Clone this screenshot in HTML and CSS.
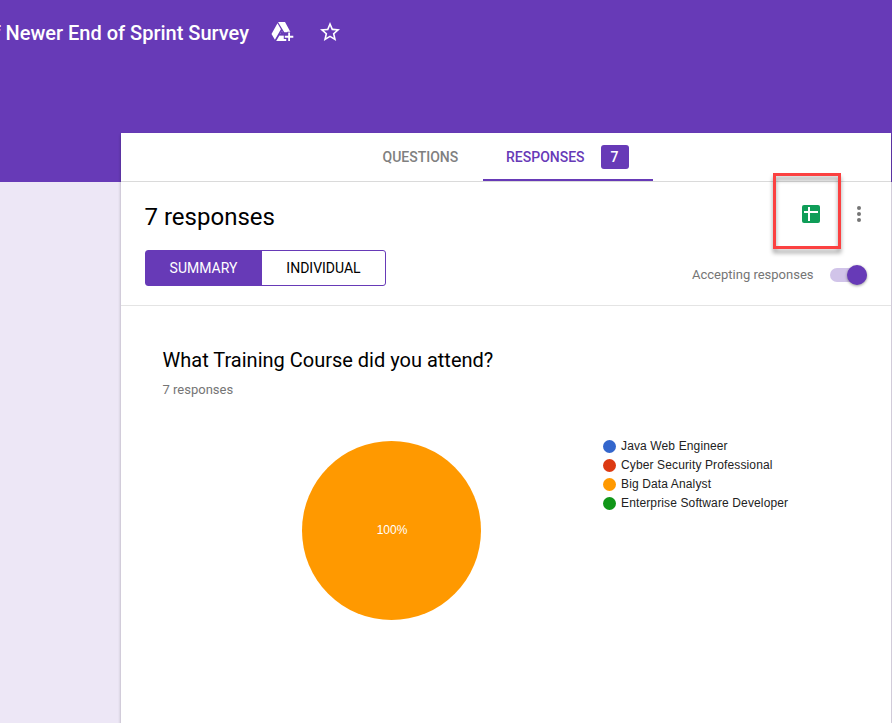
FILE: index.html
```html
<!DOCTYPE html>
<html lang="en">
<head>
<meta charset="utf-8">
<title>Newer End of Sprint Survey</title>
<link rel="stylesheet" href="styles.css">
</head>
<body>
<header class="banner">
  <div class="doc-title"><span>f Newer End of Sprint Survey</span></div>
  <svg class="drive-icon" width="24" height="22" viewBox="0 0 24 22">
    <path fill="#fff" d="M8.300 1H15L20.600 11.200H14.300L8.300 1.600zM7.500 2.200L10.900 8.200 4.900 18.800 1.500 13.100zM10 13.600H13.500L12 9.800 10.500 12.300zM9.400 14.400H16.500V20H6.200z"/>
    <path fill="#673ab7" d="M11.900 9.600L14.300 14.200H9.500zM13.800 13.900H17.400V10.700H21.200V13.900H24V18.100H21V21H16.500V18.100H13.800z"/>
    <path fill="#fff" d="M14.800 14.800H18.200V11.500H20V14.800H23.300V16.700H20V20H18.200V16.700H14.800z"/>
  </svg>
  <svg class="star-icon" width="24" height="24" viewBox="0 0 24 24">
    <path fill="#fff" d="M22 9.240l-7.190-.62L12 2 9.190 8.630 2 9.240l5.460 4.730L5.820 21 12 17.270 18.180 21l-1.630-7.030L22 9.240zM12 15.400l-3.760 2.270 1-4.280-3.320-2.880 4.380-.38L12 6.100l1.710 4.040 4.380.38-3.320 2.880 1 4.280L12 15.400z"/>
  </svg>
</header>
<main class="card">
  <nav class="tabs">
    <div class="tab"><span class="tab-label">QUESTIONS</span></div>
    <div class="tab tab-active"><span class="tab-label">RESPONSES</span><span class="badge">7</span></div>
  </nav>
  <section class="summary">
    <div class="summary-row">
      <h1>7 responses</h1>
      <div class="actions">
        <div class="sheet-button">
          <svg width="18" height="18" viewBox="0 0 18 18">
            <rect width="18" height="18" rx="2" fill="#0f9d58"/>
            <path fill="#fff" d="M2 6h4V2h2v4h8v2H8v8H6V8H2z"/>
          </svg>
          <div class="highlight"></div>
        </div>
        <svg class="more" width="4" height="16" viewBox="0 0 4 16" fill="#757575">
          <circle cx="2" cy="2" r="2"/><circle cx="2" cy="8" r="2"/><circle cx="2" cy="14" r="2"/>
        </svg>
      </div>
    </div>
    <div class="summary-row">
      <div class="segments">
        <div class="segment segment-active"><span>SUMMARY</span></div>
        <div class="segment"><span>INDIVIDUAL</span></div>
      </div>
      <div class="accepting"><span>Accepting responses</span><div class="toggle"><div class="knob"></div></div></div>
    </div>
  </section>
  <section class="question">
    <h2>What Training Course did you attend?</h2>
    <p class="count">7 responses</p>
    <div class="chart">
      <div class="pie"><span>100%</span></div>
      <ul class="legend">
        <li><i class="dot blue"></i><span>Java Web Engineer</span></li>
        <li><i class="dot red"></i><span>Cyber Security Professional</span></li>
        <li><i class="dot orange"></i><span>Big Data Analyst</span></li>
        <li><i class="dot green"></i><span>Enterprise Software Developer</span></li>
      </ul>
    </div>
  </section>
</main>
</body>
</html>
```
FILE: styles.css
```css
* { box-sizing: border-box; }
body {
  margin: 0;
  height: 723px;
  overflow: hidden;
  background: linear-gradient(#673ab7 182px, #ede7f6 182px);
  font-family: Roboto, sans-serif;
  color: #000;
}
h1, h2, p, ul { margin: 0; padding: 0; font-weight: 400; }
.banner { height: 133px; display: flex; align-items: flex-start; }
.doc-title {
  width: 249px;
  height: 24px;
  margin-top: 21px;
  display: flex;
  justify-content: flex-end;
  color: #fff;
  font-size: 20px;
  font-weight: 500;
  line-height: 24px;
  white-space: pre;
}
.drive-icon { margin: 21px 0 0 21px; }
.star-icon { margin: 20px 0 0 24px; }
.card {
  width: 770px;
  height: 600px;
  margin-left: 121px;
  background: #fff;
  box-shadow: 0 2px 3px rgba(0, 0, 0, .3);
}
.tabs {
  height: 49px;
  border-bottom: 1px solid #dadada;
  display: flex;
  padding-left: 238px;
}
.tab {
  height: 48px;
  width: 124px;
  padding-left: 23.500px;
  display: flex;
  align-items: center;
  font-size: 14px;
  font-weight: 500;
  color: #808080;
}
.tab-active { width: 170px; padding: 2px 0 0 23px; color: #673ab7; border-bottom: 2px solid #673ab7; }
.badge {
  width: 28px;
  height: 24px;
  margin-left: 16px;
  border-radius: 3px;
  background: #673ab7;
  color: #fff;
  line-height: 24px;
  text-align: center;
}
.summary { height: 124px; border-bottom: 1px solid #e4e4e4; padding: 14px 24px 0; }
.summary-row { display: flex; justify-content: space-between; }
.summary-row:first-child { height: 54px; }
h1 { font-size: 24px; line-height: 42px; margin-left: -.5px; }
.actions { display: flex; align-items: flex-start; padding-right: 6px; }
.sheet-button { position: relative; width: 18px; height: 18px; margin: 9px 37px 0 0; }
.sheet-button svg { display: block; }
.highlight {
  position: absolute;
  left: -29px;
  top: -32px;
  width: 68px;
  height: 76px;
  border: 3px solid #fb4141;
  filter: drop-shadow(0 4px 2px rgba(0, 0, 0, .38));
}
.more { margin-top: 10px; }
.segments {
  width: 241px;
  height: 36px;
  border: 1px solid #673ab7;
  border-radius: 3px;
  display: flex;
  font-size: 14px;
  line-height: 34px;
  text-align: center;
}
.segment { flex: 1; }
.segment-active { flex: 0 0 116px; padding-right: 1px; background: #673ab7; color: #fff; }
.accepting {
  display: flex;
  align-items: center;
  height: 50px;
  font-size: 13px;
  color: #757575;
}
.accepting > span { margin-bottom: 1px; }
.toggle {
  width: 37px;
  height: 14px;
  margin-left: 16.500px;
  border-radius: 7px;
  background: #d1c4e9;
  display: flex;
  align-items: center;
  justify-content: flex-end;
}
.knob { width: 20px; height: 20px; border-radius: 50%; background: #673ab7; box-shadow: 0 1px 3px rgba(0, 0, 0, .4); }
.question { padding: 42px 42px 0; }
h2 { font-size: 20px; line-height: 24px; margin-left: -.5px; }
.count { margin: 10px 0 0 -.5px; font-size: 13px; line-height: 16px; color: #757575; }
.chart {
  display: flex;
  align-items: flex-start;
  margin-top: 42.5px;
  padding-left: 139px;
  font-family: "Liberation Sans", Arial, sans-serif;
}
.pie {
  width: 179px;
  height: 179px;
  border-radius: 50%;
  background: #ff9900;
  color: #fff;
  font-size: 12px;
  line-height: 179px;
  text-align: center;
  padding-left: 1px;
}
.legend { list-style: none; margin: -4px 0 0 122px; font-size: 12px; letter-spacing: .13px; color: #222; white-space: nowrap; }
.legend li { height: 19px; display: flex; align-items: center; }
.dot { width: 13px; height: 13px; margin-right: 5px; border-radius: 50%; }
.blue { background: #3366cc; }
.red { background: #dc3912; }
.orange { background: #ff9900; }
.green { background: #109618; }
```
